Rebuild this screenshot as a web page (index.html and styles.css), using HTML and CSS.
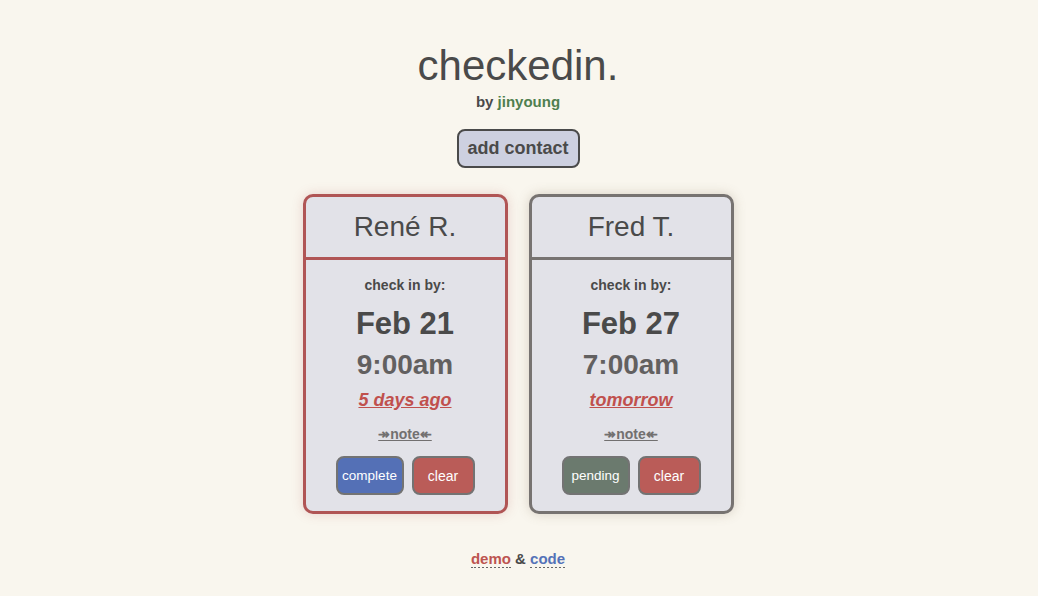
FILE: index.html
```html
<!DOCTYPE html>
<html>
<head>
<meta charset="utf-8">
<link rel="stylesheet" href="styles.css">
</head>
<body>
<div class="page">
  <h1 class="title">checkedin.</h1>
  <div class="byline">by <span class="author">jinyoung</span></div>
  <button class="add-btn">add contact</button>
  <div class="cards">
    <div class="card card-late">
      <div class="card-head">René R.</div>
      <div class="card-body">
        <div class="label">check in by:</div>
        <div class="date">Feb 21</div>
        <div class="time">9:00am</div>
        <div class="rel">5 days ago</div>
        <div class="note">↠note↞</div>
        <div class="actions">
          <button class="btn btn-complete">complete</button>
          <button class="btn btn-clear">clear</button>
        </div>
      </div>
    </div>
    <div class="card card-ok">
      <div class="card-head">Fred T.</div>
      <div class="card-body">
        <div class="label">check in by:</div>
        <div class="date">Feb 27</div>
        <div class="time">7:00am</div>
        <div class="rel">tomorrow</div>
        <div class="note">↠note↞</div>
        <div class="actions">
          <button class="btn btn-pending">pending</button>
          <button class="btn btn-clear">clear</button>
        </div>
      </div>
    </div>
  </div>
  <div class="footer"><span class="demo">demo</span> &amp; <span class="code">code</span></div>
</div>
</body>
</html>
```
FILE: styles.css
```css
html, body {
  margin: 0;
  padding: 0;
  background: #f9f6ee;
  font-family: "Liberation Sans", Arial, Helvetica, sans-serif;
  color: #4a4a4a;
}
.page {
  display: flex;
  flex-direction: column;
  align-items: center;
  padding-top: 41px;
  padding-right: 2px;
}
.title {
  margin: 0;
  font-size: 42px;
  font-weight: normal;
  line-height: 50px;
  color: #4a4a4a;
}
.byline {
  margin-top: 2px;
  font-size: 15px;
  font-weight: bold;
  line-height: 18px;
  color: #4a4a4a;
}
.author { color: #4f7f4f; }
.add-btn {
  margin-top: 18px;
  width: 123px;
  height: 39px;
  background: #cdd0e0;
  border: 2px solid #4a4a4a;
  border-radius: 8px;
  font-family: inherit;
  font-size: 18px;
  font-weight: bold;
  color: #4a4a4a;
  padding: 0;
}
.cards {
  display: flex;
  gap: 21px;
  margin-top: 26px;
}
.card {
  width: 199px;
  height: 314px;
  border: 3px solid #777371;
  border-radius: 10px;
  background: #e2e2e8;
  box-shadow: 0 0 12px rgba(120, 100, 70, 0.25);
  display: flex;
  flex-direction: column;
}
.card-late {
  border-color: #b05555;
  box-shadow: 0 0 12px rgba(176, 85, 85, 0.22);
}
.card-head {
  height: 60px;
  display: flex;
  align-items: center;
  justify-content: center;
  font-size: 28px;
  color: #4a4a4a;
  border-bottom: 3px solid #777371;
}
.card-late .card-head { border-bottom-color: #b05555; }
.card-body {
  display: flex;
  flex-direction: column;
  align-items: center;
  padding-top: 17px;
}
.label {
  font-size: 14px;
  font-weight: bold;
  line-height: 16px;
}
.date {
  margin-top: 13px;
  font-size: 31px;
  font-weight: bold;
  line-height: 36px;
  color: #4a4a4a;
}
.time {
  margin-top: 7px;
  font-size: 28px;
  font-weight: bold;
  line-height: 32px;
  color: #626060;
}
.rel {
  margin-top: 9px;
  font-size: 18px;
  font-weight: bold;
  font-style: italic;
  text-decoration: underline;
  line-height: 20px;
  color: #c0504d;
}
.note {
  margin-top: 16px;
  font-size: 14px;
  font-weight: bold;
  line-height: 16px;
  text-decoration: underline;
  color: #727070;
}
.actions {
  display: flex;
  gap: 8px;
  margin-top: 14px;
}
.btn {
  height: 39px;
  border: 2px solid #737373;
  border-radius: 8px;
  font-family: inherit;
  font-size: 13.5px;
  color: #ffffff;
  padding: 0;
}
.btn-complete { width: 68px; background: #5470b6; }
.btn-pending { width: 68px; background: #6b7a6e; }
.btn-clear { width: 63px; background: #ba5c58; font-size: 14px; }
.footer {
  margin-top: 36px;
  font-size: 15px;
  font-weight: bold;
  line-height: 18px;
  color: #4a4a4a;
}
.demo {
  color: #bd5450;
  border-bottom: 2px dotted #666;
}
.code {
  color: #5472b8;
  border-bottom: 2px dotted #666;
}
```
